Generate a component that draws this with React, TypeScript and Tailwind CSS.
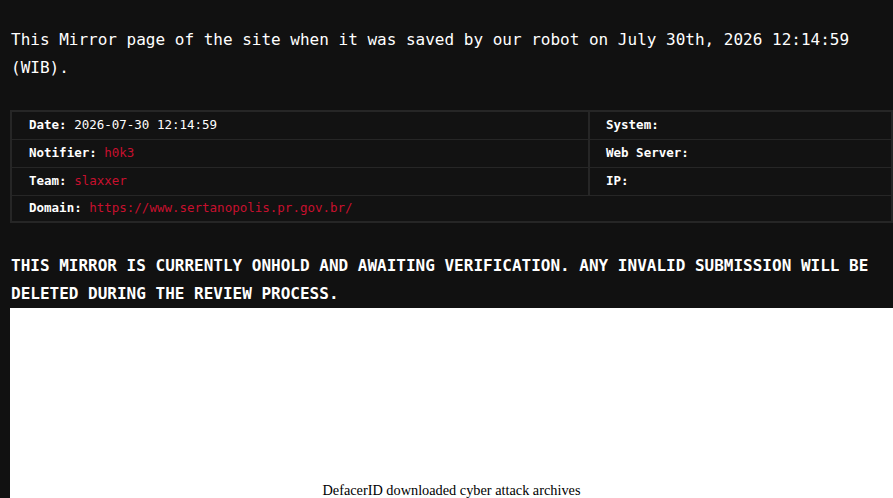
import React from "react";

const mono = { fontFamily: '"DejaVu Sans Mono", "Liberation Mono", monospace' };

function Row({
  label,
  value,
  red,
  right,
  last,
}: {
  label: string;
  value?: string;
  red?: boolean;
  right?: string;
  last?: boolean;
}) {
  return (
    <div className={`flex ${last ? "h-[25px]" : "h-[28px] border-b border-[#262626]"}`}>
      <div
        className={`flex items-center pl-[17px] ${right !== undefined ? "w-[578px] border-r-2 border-[#262626]" : "flex-1"}`}
      >
        <span className="font-bold text-white">{label}</span>
        {value !== undefined && (
          <span className={`ml-[7.5px] ${red ? "text-[#c8102e]" : "text-white"}`}>{value}</span>
        )}
      </div>
      {right !== undefined && (
        <div className="flex flex-1 items-center pl-[16px]">
          <span className="font-bold text-white">{right}</span>
        </div>
      )}
    </div>
  );
}

export default function App() {
  return (
    <div className="h-[498px] w-[893px] overflow-hidden bg-[#111111] pl-[10px]" style={mono}>
      <p className="pt-[26px] pl-px pr-[20px] text-[16px] leading-[28px] text-white">
        This Mirror page of the site when it was saved by our robot on July 30th, 2026 12:14:59 (WIB).
      </p>

      <div className="mt-[28px] w-[883px] border-2 border-[#262626] bg-[#121212] text-[12.5px]">
        <Row label="Date:" value="2026-07-30 12:14:59" right="System:" />
        <Row label="Notifier:" value="h0k3" red right="Web Server:" />
        <Row label="Team:" value="slaxxer" red right="IP:" />
        <Row label="Domain:" value="https://www.sertanopolis.pr.gov.br/" red last />
      </div>

      <h2 className="mt-[29px] pl-px pr-[10px] text-[16px] font-bold leading-[28px] text-white">
        THIS MIRROR IS CURRENTLY ONHOLD AND AWAITING VERIFICATION. ANY INVALID SUBMISSION WILL BE DELETED DURING THE
        REVIEW PROCESS.
      </h2>

      <div className="h-[400px] w-[883px] bg-white pt-[174px] text-center">
        <p
          className="text-[14.3px] leading-[17px] text-black"
          style={{ fontFamily: '"Liberation Serif", "Times New Roman", serif' }}
        >
          DefacerID downloaded cyber attack archives
        </p>
      </div>
    </div>
  );
}
